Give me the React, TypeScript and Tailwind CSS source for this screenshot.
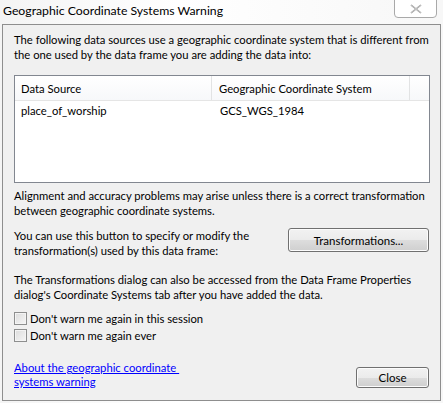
import React from "react";

const font = { fontFamily: 'Lato, "Noto Sans", Arial, sans-serif' };

function Btn({ children, className }: { children: React.ReactNode; className: string }) {
  return (
    <div
      className={
        "flex items-center justify-center rounded-[3px] border border-[#707070] text-[11.5px] text-black bg-[linear-gradient(#f2f2f2_0%,#ebebeb_50%,#dddddd_51%,#cfcfcf_100%)] shadow-[inset_0_0_0_1px_#fcfcfc] " +
        className
      }
    >
      {children}
    </div>
  );
}

function Check({ label }: { label: string }) {
  return (
    <div className="flex items-center h-[17px]">
      <div className="w-[13px] h-[13px] border border-[#8e8f8f] bg-[linear-gradient(135deg,#dcdcdc,#f6f6f6)] shadow-[inset_0_0_0_1px_#f4f4f4]" />
      <span className="ml-[3px]">{label}</span>
    </div>
  );
}

export default function App() {
  return (
    <div
      className="relative w-[443px] h-[403px] bg-[linear-gradient(90deg,#f4f4f4,#ffffff_40%,#f7f7f7)] text-[11.25px] text-black leading-[15px] flex flex-col whitespace-nowrap"
      style={font}
    >
      <div className="h-[24px] flex items-center pl-[3px] pb-[3px] text-[12.25px] text-black">
        Geographic Coordinate Systems Warning
      </div>
      <div className="absolute right-[6px] top-[-1px] w-[43px] h-[19px] border border-[#a9a9a9] rounded-b-[4px] bg-white flex items-center justify-center">
        <svg width="12" height="10" viewBox="0 0 12 10">
          <path d="M1 1 L11 9 M11 1 L1 9" stroke="#8a8a8a" strokeWidth="1.6" fill="none" />
          <path d="M1 1 L11 9 M11 1 L1 9" stroke="#ffffff" strokeWidth="0.5" fill="none" />
        </svg>
      </div>
      <div className="ml-[2px] w-[439px] h-[377px] border border-[#8e8e8e] bg-[#f0f0f0] pl-[11px] pr-[11px] pt-[7px] flex flex-col">
        <p>
          The following data sources use a geographic coordinate system that is different from
          <br />
          the one used by the data frame you are adding the data into:
        </p>
        <div className="mt-[13px] w-[416px] h-[108px] border border-[#828790] bg-white flex flex-col">
          <div className="flex h-[25px] border-b border-[#e5e5e5] bg-[linear-gradient(#ffffff,#f7f8fa)]">
            <div className="w-[197px] border-r border-[#e2e3e4] pl-[6px] flex items-center">Data Source</div>
            <div className="w-[198px] border-r border-[#e2e3e4] pl-[7px] flex items-center">Geographic Coordinate System</div>
            <div className="flex-1" />
          </div>
          <div className="flex h-[18px] items-center">
            <div className="w-[197px] pl-[6px]">place_of_worship</div>
            <div className="w-[198px] pl-[8px]">GCS_WGS_1984</div>
          </div>
        </div>
        <p className="mt-[5px]">
          Alignment and accuracy problems may arise unless there is a correct transformation
          <br />
          between geographic coordinate systems.
        </p>
        <div className="mt-[10px] flex items-start justify-between">
          <p>
            You can use this button to specify or modify the
            <br />
            transformation(s) used by this data frame:
          </p>
          <Btn className="w-[141px] h-[24px]">Transformations...</Btn>
        </div>
        <p className="mt-[14px]">
          The Transformations dialog can also be accessed from the Data Frame Properties
          <br />
          dialog's Coordinate Systems tab after you have added the data.
        </p>
        <div className="mt-[8px] flex flex-col">
          <Check label="Don't warn me again in this session" />
          <Check label="Don't warn me again ever" />
        </div>
        <div className="mt-[17px] flex items-start justify-between">
          <a className="text-[#0000ff] underline leading-[14px]">
            About the geographic coordinate&nbsp;
            <br />
            systems warning
          </a>
          <Btn className="w-[73px] h-[21px] mt-[6px]">Close</Btn>
        </div>
      </div>
    </div>
  );
}
